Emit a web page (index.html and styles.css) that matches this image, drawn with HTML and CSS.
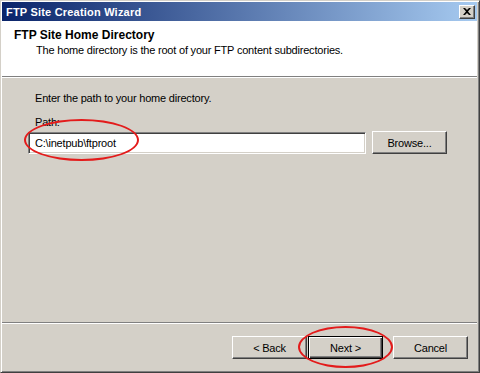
FILE: index.html
```html
<!DOCTYPE html>
<html lang="en">
<head>
  <meta charset="UTF-8" />
  <title>FTP Site Creation Wizard</title>
  <link rel="stylesheet" href="styles.css">
</head>
<body>

<div class="window">
  <div class="titlebar">
    <span class="title">FTP Site Creation Wizard</span>
    <button class="close-btn" aria-label="Close">
      <svg width="8" height="7" viewBox="0 0 8 7">
        <path d="M0 0h2l2 2 2-2h2L5 3.5 8 7H6L4 5 2 7H0l3-3.5z" fill="#000"/>
      </svg>
    </button>
  </div>

  <div class="header">
    <div class="heading">FTP Site Home Directory</div>
    <div class="subheading">The home directory is the root of your FTP content subdirectories.</div>
  </div>

  <div class="content">
    <p class="intro">Enter the path to your home directory.</p>
    <label class="label" for="path">Path:</label>
    <div class="path-row">
      <input type="text" id="path" class="textbox" value="C:\inetpub\ftproot" />
      <button class="btn">Browse...</button>
    </div>
    <div class="mark mark-path"></div>
  </div>

  <div class="footer">
    <button class="btn">&lt; Back</button>
    <button class="btn default">Next &gt;</button>
    <button class="btn cancel">Cancel</button>
    <div class="mark mark-next"></div>
  </div>
</div>

</body>
</html>
```

FILE: styles.css
```css
body {
  margin: 0;
  font-family: "Liberation Sans", Arial, sans-serif;
  font-size: 11px;
  letter-spacing: -0.2px;
  color: #000;
  background: #d4d0c8;
}
.window {
  width: 480px;
  height: 373px;
  box-sizing: border-box;
  display: flex;
  flex-direction: column;
  background: #d4d0c8;
  border: 1px solid;
  border-color: #d4d0c8 #404040 #404040 #d4d0c8;
  box-shadow: inset 1px 1px 0 #fff, inset -1px -1px 0 #808080;
  padding: 1px 2px 2px 1px;
}
.titlebar {
  height: 19px;
  flex: none;
  display: flex;
  align-items: center;
  justify-content: space-between;
  padding: 0 2px 0 4px;
  background: linear-gradient(to right, #0a246a, #a6caf0);
}
.title {
  color: #fff;
  font-weight: bold;
  font-size: 11px;
  letter-spacing: 0.2px;
}
.close-btn {
  width: 16px;
  height: 14px;
  padding: 0;
  margin: 0;
  display: flex;
  align-items: center;
  justify-content: center;
  background: #d4d0c8;
  border: 1px solid;
  border-color: #fff #404040 #404040 #fff;
  box-shadow: inset -1px -1px 0 #808080;
}
.header {
  height: 56px;
  flex: none;
  background: #fff;
  border-bottom: 1px solid #808080;
  box-shadow: 0 1px 0 #fff;
  padding: 7px 0 0 12px;
  box-sizing: border-box;
}
.heading {
  font-weight: bold;
  font-size: 12px;
  letter-spacing: 0;
  line-height: 14px;
}
.subheading {
  margin: 2px 0 0 22px;
  line-height: 13px;
}
.content {
  position: relative;
  flex: 1;
  margin-top: 1px;
  padding: 14px 0 0 33px;
  border-bottom: 1px solid #808080;
  box-shadow: 0 1px 0 #fff;
}
.intro {
  margin: 0;
  line-height: 13px;
}
.label {
  display: block;
  margin-top: 11px;
  line-height: 13px;
}
.path-row {
  display: flex;
  align-items: center;
  gap: 6px;
  margin: 2px 0 0 -7px;
}
.textbox {
  width: 338px;
  height: 22px;
  box-sizing: border-box;
  font-family: inherit;
  font-size: 11px;
  letter-spacing: -0.2px;
  padding: 0 0 0 6px;
  margin: 0;
  background: #fff;
  border: 1px solid;
  border-color: #808080 #fff #fff #808080;
  box-shadow: inset 1px 1px 0 #404040, inset -1px -1px 0 #d4d0c8;
  outline: none;
}
.btn {
  width: 75px;
  height: 23px;
  box-sizing: border-box;
  font-family: inherit;
  font-size: 11px;
  letter-spacing: -0.2px;
  color: #000;
  padding: 0;
  margin: 0;
  background: #d4d0c8;
  border: 1px solid;
  border-color: #fff #404040 #404040 #fff;
  box-shadow: inset -1px -1px 0 #808080;
}
.btn.default {
  border: 1px solid #000;
  box-shadow: inset 1px 1px 0 #fff, inset -1px -1px 0 #404040, inset -2px -2px 0 #808080;
}
.footer {
  position: relative;
  height: 46px;
  flex: none;
  margin-top: 1px;
  display: flex;
  align-items: flex-start;
  justify-content: flex-end;
  gap: 1px;
  padding: 12px 9px 0 0;
  box-sizing: border-box;
}
.btn.cancel {
  margin-left: 9px;
}
.mark {
  position: absolute;
  border: 2px solid #e31b1b;
  border-radius: 50%;
  box-sizing: border-box;
  pointer-events: none;
}
.mark-path {
  left: 22px;
  top: 41px;
  width: 115px;
  height: 42px;
}
.mark-next {
  left: 296px;
  top: 2px;
  width: 95px;
  height: 42px;
}
```
